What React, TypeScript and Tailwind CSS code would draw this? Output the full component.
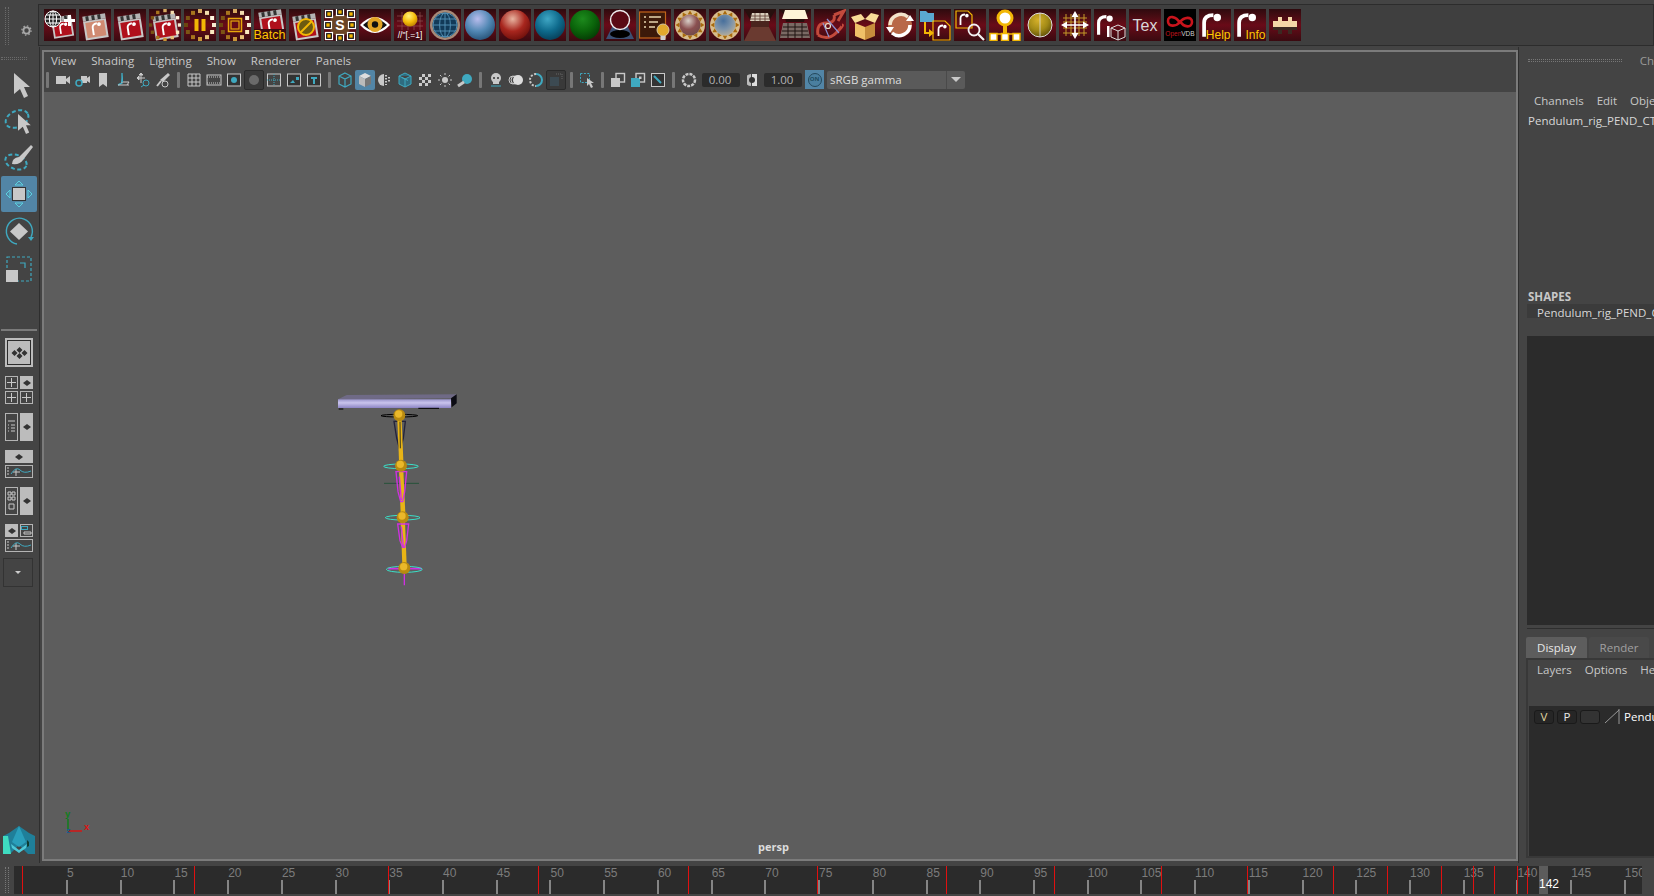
import type { ReactNode } from "react";

const UI_FONT = "font-['Open_Sans','Noto_Sans',sans-serif]";

const Sphere = ({ id, light, mid, dark, r = 13, cy = 16 }: { id: string; light: string; mid: string; dark: string; r?: number; cy?: number }) => (
  <>
    <radialGradient id={id} cx="0.42" cy="0.3" r="0.75">
      <stop offset="0" stopColor={light} />
      <stop offset="0.55" stopColor={mid} />
      <stop offset="1" stopColor={dark} />
    </radialGradient>
    <circle cx="16" cy={cy} r={r} fill={`url(#${id})`} />
  </>
);

const Swirl = ({ x = 0, y = 0, s = 1, color = "#fff" }: { x?: number; y?: number; s?: number; color?: string }) => (
  <g transform={`translate(${x} ${y}) scale(${s})`}>
    <path d="M2 16V7Q2 2 8 2" fill="none" stroke={color} strokeWidth="2.4" />
    <circle cx="10.5" cy="3.5" r="2.4" fill={color} />
  </g>
);

const Clap = ({ body = "#b0101c" }: { body?: string }) => (
  <g transform="rotate(-9 16 18)">
    <rect x="5" y="6" width="23" height="5" fill="#b4b4b4" />
    <path d="M8 6h3v5H8zM14 6h3v5h-3zM20 6h3v5h-3z" fill="#333" />
    <rect x="5" y="11" width="23" height="19" fill="#c8c8c8" />
    <rect x="7" y="12.5" width="19" height="15.5" fill={body} />
    <Swirl x={12} y={13} s={0.8} />
  </g>
);

const RING = ["#f6ead0", "#fbe9c0", "#e8c27a", "#c99436", "#a8741e", "#7c5414", "#6b4510", "#7c5414", "#a8741e", "#d6a860", "#f2dcae", "#fff6e0"];

const Ring = ({ radius = 14, size = 4 }: { radius?: number; size?: number }) => (
  <>
    {RING.map((c, i) => {
      const a = (i * Math.PI) / 6;
      const x = 16 + radius * Math.cos(a) - size / 2;
      const y = 16 + radius * Math.sin(a) - size / 2;
      return <rect key={i} x={x} y={y} width={size} height={size} fill={c} />;
    })}
  </>
);

const TriRing = () => (
  <>
    <circle cx="16" cy="16" r="15" fill="#d8bd8c" />
    {Array.from({ length: 12 }).map((_, i) => (
      <path key={i} d="M16 1.5l2.4 4h-4.8z" fill="#a86a0c" transform={`rotate(${i * 30} 16 16)`} />
    ))}
  </>
);

const Handle = ({ x, y }: { x: number; y: number }) => (
  <g>
    <rect x={x - 3.5} y={y - 3.5} width="7" height="7" fill="#111" stroke="#fff" strokeWidth="1.2" />
    <rect x={x - 1.7} y={y - 1.7} width="3.4" height="3.4" fill="#f2b705" />
  </g>
);

const GlobeLines = ({ stroke = "#fff", cx = 16, cy = 16, r = 10 }: { stroke?: string; cx?: number; cy?: number; r?: number }) => (
  <g fill="none" stroke={stroke} strokeWidth="1">
    <circle cx={cx} cy={cy} r={r} />
    <ellipse cx={cx} cy={cy} rx={r * 0.45} ry={r} />
    <path d={`M${cx} ${cy - r}V${cy + r}M${cx - r} ${cy}H${cx + r}M${cx - r * 0.87} ${cy - r * 0.5}H${cx + r * 0.87}M${cx - r * 0.87} ${cy + r * 0.5}H${cx + r * 0.87}`} />
  </g>
);

const YText = ({ children, x = 31.5, size = 10 }: { children: string; x?: number; size?: number }) => (
  <text x={x} y="29.5" textAnchor="end" fontSize={size} fill="#ffc800" fontFamily="Liberation Sans, sans-serif">
    {children}
  </text>
);

const SHELF: { key: string; black?: boolean; art: ReactNode }[] = [
  {
    key: "new-render",
    art: (
      <>
        <g transform="translate(4 2) scale(0.88)"><Clap /></g>
        <circle cx="9" cy="10" r="8" fill="#222" />
        <GlobeLines cx={9} cy={10} r={8} />
        <path d="M20 10h4V6h3v4h4v3h-4v4h-3v-4h-4z" fill="#fff" />
      </>
    ),
  },
  { key: "clap-soft", art: <Clap body="#d08a72" /> },
  { key: "clap", art: <Clap /> },
  { key: "clap-ring", art: <><Clap /><Ring radius={14.5} size={3.4} /></> },
  { key: "pause", art: <><Ring /><path d="M10.5 10h4v12h-4zM17.5 10h4v12h-4z" fill="#f2b705" /></> },
  { key: "stop", art: <><Ring /><rect x="9.5" y="9.5" width="13" height="13" fill="none" stroke="#e8a80c" strokeWidth="1.5" /><rect x="12" y="12" width="8" height="8" fill="none" stroke="#e8a80c" strokeWidth="1.2" /></> },
  { key: "batch", art: <><g transform="translate(1 -4)"><Clap /></g><rect y="20" width="32" height="12" fill="#3a0a10" /><YText size={12.5}>Batch</YText></> },
  { key: "no-clap", art: <><Clap /><circle cx="17" cy="18" r="8" fill="#6d5a10" stroke="#f2b705" strokeWidth="2" /><path d="M11.5 23.5l11-11" stroke="#f2b705" strokeWidth="2" /></> },
  {
    key: "shaders",
    art: (
      <>
        <circle cx="16" cy="16" r="11" fill="#6a4426" />
        <text x="16" y="21" textAnchor="middle" fontSize="14" fontWeight="700" fill="#fff" fontFamily="Liberation Sans, sans-serif">S</text>
        {[[5, 5], [16, 3], [27, 5], [4, 16], [28, 16], [5, 27], [16, 29], [27, 27]].map(([x, y]) => (
          <Handle key={`${x}-${y}`} x={x} y={y} />
        ))}
      </>
    ),
  },
  {
    key: "eye",
    art: (
      <>
        <path d="M1 16Q16 0 31 16Q16 32 1 16Z" fill="#fff" />
        <path d="M4 16Q16 4 28 16Q16 27 4 16Z" fill="#111" />
        <circle cx="16" cy="15.5" r="7.5" fill="#e2a424" />
        <circle cx="16" cy="15.5" r="3.2" fill="#111" />
      </>
    ),
  },
  {
    key: "expr",
    art: (
      <>
        <path d="M3 7h26M3 12h26M3 17h26M8 3v18M14 3v18M20 3v18M26 3v18" stroke="#9c5a5a" strokeWidth="0.6" />
        <Sphere id="s-expr" light="#fff27a" mid="#f6bd0a" dark="#b87a00" r={7.5} cy={10} />
        <text x="16" y="29" textAnchor="middle" fontSize="8.5" fill="#fff" fontFamily="Liberation Sans, sans-serif">//"[.=1]</text>
      </>
    ),
  },
  { key: "globe", art: <><circle cx="16" cy="16" r="15" fill="#a68a78" /><circle cx="16" cy="16" r="12.5" fill="#123a58" /><GlobeLines stroke="#4f8cb0" r={12} /></> },
  { key: "sphere-blue", art: <Sphere id="s-blue" light="#b8bcec" mid="#5288b4" dark="#244f74" r={15} /> },
  { key: "sphere-red", art: <Sphere id="s-red" light="#e8b4a0" mid="#a8261e" dark="#6a0e0a" r={15} /> },
  { key: "sphere-teal", art: <Sphere id="s-teal" light="#3fa6c4" mid="#0e6a8c" dark="#063c55" r={15} /> },
  { key: "sphere-green", art: <Sphere id="s-green" light="#1d8a1d" mid="#0a640a" dark="#043804" r={15} /> },
  {
    key: "cone",
    art: (
      <>
        <path d="M11 12L2 30h28l-9-18z" fill="#3c4f72" />
        <ellipse cx="16" cy="25" rx="10" ry="4" fill="#000" />
        <circle cx="16" cy="11" r="9.5" fill="#5a0a14" stroke="#eee" strokeWidth="1.4" />
      </>
    ),
  },
  {
    key: "list-bulb",
    art: (
      <>
        <rect x="0.5" y="3" width="26" height="26" fill="#3c1a0a" stroke="#c2641a" strokeWidth="1.2" />
        <path d="M5 8h2M10 8h12M5 13h2M10 13h9M5 18h2M10 18h6" stroke="#e7d6b0" strokeWidth="1.6" />
        <circle cx="24" cy="21" r="6" fill="#e2a92c" stroke="#d9c9a0" />
        <rect x="21.5" y="27" width="5" height="4" fill="#cfcfcf" />
      </>
    ),
  },
  { key: "tri-red", art: <><TriRing /><Sphere id="s-tr" light="#d8cfc8" mid="#8a5050" dark="#6e4a4a" r={10.5} /></> },
  { key: "tri-blue", art: <><TriRing /><Sphere id="s-tb" light="#476f9c" mid="#7e94aa" dark="#b8ae98" r={10.5} /></> },
  {
    key: "room-top",
    art: (
      <>
        <path d="M0 0h32L25 12H7z" fill="#27100e" />
        <path d="M8 4h16l2 8H6z" fill="#d8cebc" />
        <path d="M6 7h20M6 10h20M11 4v8M16 4v8M21 4v8" stroke="#5a3a30" strokeWidth="0.8" />
        <path d="M0 32L7 18h18l7 14z" fill="#6a3a30" />
        <path d="M7 18h18v-6H7z" fill="#4a241e" />
      </>
    ),
  },
  {
    key: "room-bottom",
    art: (
      <>
        <path d="M0 0h32L27 5l-2 8H7L5 5z" fill="#27100e" />
        <path d="M6 1h20l3 9H3z" fill="#fff4d8" />
        <path d="M4 14h24l3 15H1z" fill="#7a6a64" />
        <path d="M4 18h24M3 22h26M2 26h28M9 14v15M16 14v15M23 14v15" stroke="#1e1210" strokeWidth="1" />
      </>
    ),
  },
  {
    key: "tangle",
    art: (
      <>
        <path d="M4 26Q2 14 12 14T20 6M20 6L30 2L24 12M4 26Q14 32 22 24T28 16" fill="none" stroke="#c24a3c" strokeWidth="3" />
        <path d="M9 14l6 14M13 10l12 14" fill="none" stroke="#8b8fd0" strokeWidth="1.2" />
        <circle cx="14" cy="17" r="2.5" fill="none" stroke="#e8e0c8" strokeWidth="1.2" />
      </>
    ),
  },
  {
    key: "box",
    art: (
      <>
        <path d="M6 14l10 4v13L6 27z" fill="#f0c068" />
        <path d="M26 14l-10 4v13l10-4z" fill="#c78c3c" />
        <path d="M6 14L2 8l10-3 4 5-10 4zM26 14l4-8-8-2-6 6z" fill="#f8dc96" />
      </>
    ),
  },
  {
    key: "refresh",
    art: (
      <>
        <circle cx="16" cy="16" r="12" fill="#b86848" />
        <path d="M6 16A11 11 0 0 1 24 8" fill="none" stroke="#f2e4cc" strokeWidth="3.5" />
        <path d="M26 16A11 11 0 0 1 8 24" fill="none" stroke="#fff" strokeWidth="3.5" />
        <path d="M2 18h8l-4 6zM22 12h8l-4 -6z" fill="#fff" />
      </>
    ),
  },
  {
    key: "folder",
    art: (
      <>
        <path d="M1 2h6l2 2h6v9H1z" fill="#5aa8d0" />
        <path d="M6 13v11h5" fill="none" stroke="#f2b705" strokeWidth="2" />
        <path d="M10 20v8l5-4z" fill="#f2b705" />
        <path d="M14 12h12l5 5v14H14z" fill="none" stroke="#f2b705" strokeWidth="1.2" />
        <Swirl x={18} y={15} s={0.75} />
      </>
    ),
  },
  {
    key: "search",
    art: (
      <>
        <path d="M2 2h12l4 4v13H2z" fill="none" stroke="#f2b705" strokeWidth="1.2" />
        <Swirl x={5} y={4} s={0.75} />
        <circle cx="20" cy="21" r="5.5" fill="none" stroke="#f2f2f2" strokeWidth="1.8" />
        <path d="M24 25l6 6" stroke="#f2f2f2" strokeWidth="2.2" />
      </>
    ),
  },
  {
    key: "pin",
    art: (
      <>
        <path d="M14 14h4v10h-4z" fill="#f2b705" />
        <circle cx="16" cy="9" r="7" fill="#fff" stroke="#f2b705" strokeWidth="3" />
        <path d="M3 25h26" stroke="#f2b705" strokeWidth="1.5" />
        <rect x="1" y="24.5" width="7" height="7" fill="#fff" stroke="#f2b705" strokeWidth="1.5" />
        <rect x="12.5" y="24.5" width="7" height="7" fill="#fff" stroke="#f2b705" strokeWidth="1.5" />
        <rect x="24" y="24.5" width="7" height="7" fill="#fff" stroke="#f2b705" strokeWidth="1.5" />
      </>
    ),
  },
  { key: "olive", art: <><Sphere id="s-ol" light="#d6b12a" mid="#a28a16" dark="#5a4a08" r={12} /><circle cx="16" cy="16" r="12" fill="none" stroke="#ddd" strokeWidth="1" /><path d="M16 4v24" stroke="#ddd" strokeWidth="0.8" /></> },
  {
    key: "grid",
    art: (
      <>
        <path d="M7 5v22M12 5v22M20 5v22M25 5v22M4 9h24M4 13h24M4 19h24M4 24h24" stroke="#c49a28" strokeWidth="1" />
        <path d="M16 2l-3.5 6h7zM16 30l-3.5-6h7zM2 16l6-3.5v7zM30 16l-6-3.5v7z" fill="#fff" />
        <path d="M16 6v20M6 16h20" stroke="#fff" strokeWidth="1.6" />
      </>
    ),
  },
  {
    key: "r-cube",
    art: (
      <>
        <Swirl x={2} y={5} s={1.3} />
        <rect x="13" y="17" width="2.5" height="11" fill="#fff" />
        <path d="M17 19l7-3 7 3v9l-7 3-7-3zM17 19l7 3 7-3M24 22v9" fill="none" stroke="#ddd" strokeWidth="1" />
      </>
    ),
  },
  {
    key: "tex",
    art: (
      <text x="16" y="21.5" textAnchor="middle" fontSize="16" fill="#d8d8d8" fontFamily="Liberation Sans, sans-serif">
        Tex
      </text>
    ),
  },
  {
    key: "vdb",
    black: true,
    art: (
      <>
        <path d="M16 14C12 7 4 6 4 12s8 6 12 1 12-6 12 0-8 6-12-1" fill="none" stroke="#c8141c" strokeWidth="2.6" />
        <text x="16" y="27" textAnchor="middle" fontSize="6.5" fill="#c8141c" fontFamily="Liberation Sans, sans-serif">
          Open<tspan fill="#cfcfcf">VDB</tspan>
        </text>
      </>
    ),
  },
  { key: "help", art: <><Swirl x={2} y={3} s={1.55} /><YText size={12}>Help</YText></> },
  { key: "info", art: <><Swirl x={2} y={3} s={1.55} /><YText size={12}>Info</YText></> },
  {
    key: "puzzle",
    art: (
      <>
        <path d="M4 12h5V8h4v4h6V8h4v4h5v9h-5v4h-4v-4h-6v4H9v-4H4z" fill="#f4d8a8" />
        <path d="M4 18h24v3h-5v4h-4v-4h-6v4H9v-4H4z" fill="#1a0a0a" opacity="0.85" />
      </>
    ),
  },
];

function ShelfIcon({ black, children }: { black?: boolean; children: ReactNode }) {
  return (
    <div className={`h-8 w-8 shrink-0 ${black ? "bg-black" : "bg-gradient-to-b from-[#2e0a0e] via-[#690a18] to-[#3a0a10]"}`}>
      <svg viewBox="0 0 32 32" className="h-8 w-8">
        {children}
      </svg>
    </div>
  );
}

function Shelf() {
  return (
    <div className="flex h-[47px] shrink-0 pt-[4px]">
      <div className="flex w-[38px] shrink-0 items-center justify-between pl-[5px] pr-[6px]">
        <div className="h-[38px] w-[4px] border-x border-dotted border-[#6a6a6a]" />
        <svg viewBox="0 0 12 12" className="mt-[10px] h-[11px] w-[11px]">
          <circle cx="6" cy="6" r="3.4" fill="none" stroke="#a8a8a8" strokeWidth="2" />
          <circle cx="6" cy="6" r="5" fill="none" stroke="#a8a8a8" strokeWidth="1.4" strokeDasharray="1.6 2.3" />
        </svg>
      </div>
      <div className="flex h-[42px] flex-1 items-center gap-[3px] border border-[#2c2c2c] bg-[#3f3f3f] pl-[5px]">
        {SHELF.map((s) => (
          <ShelfIcon key={s.key} black={s.black}>
            {s.art}
          </ShelfIcon>
        ))}
      </div>
    </div>
  );
}

const TEAL = "#3fa9c0";
const GREY = "#c8c8c8";

const Arrow = ({ x = 0, y = 0, s = 1 }: { x?: number; y?: number; s?: number }) => (
  <path transform={`translate(${x} ${y}) scale(${s})`} d="M0 0L16 14H10L14 23L10 25L6 16L0 21Z" fill={GREY} />
);

function LeftTools() {
  return (
    <div className="flex w-[40px] shrink-0 flex-col items-start border-r border-[#2e2e2e]">
      <div className="ml-[1px] mt-[10px] h-[3px] w-[26px] border-y border-dotted border-[#6a6a6a]" />
      <div className="mt-[10px] flex h-[32px] w-[40px] items-center justify-center pl-[3px]">
        <svg width="20" height="28" viewBox="0 0 20 28"><Arrow x={2} y={1} s={1} /></svg>
      </div>
      <div className="flex h-[38px] w-[38px] items-center justify-center">
        <svg width="30" height="30" viewBox="0 0 30 30">
          <ellipse cx="13" cy="13" rx="12" ry="8" transform="rotate(-25 13 13)" fill="none" stroke={TEAL} strokeWidth="2" strokeDasharray="4 2.5" />
          <Arrow x={14} y={8} s={0.8} />
        </svg>
      </div>
      <div className="flex h-[36px] w-[38px] items-center justify-center">
        <svg width="30" height="30" viewBox="0 0 30 30">
          <ellipse cx="12" cy="19" rx="11" ry="7" transform="rotate(20 12 19)" fill="none" stroke={TEAL} strokeWidth="2" strokeDasharray="4 2.5" />
          <path d="M8 21Q8 15 15 14L27 2L29 4L19 17Q16 22 8 21Z" fill={GREY} />
        </svg>
      </div>
      <div className="ml-[1px] flex h-[36px] w-[36px] items-center justify-center rounded-[2px] bg-[#5285a6]">
        <svg width="30" height="30" viewBox="0 0 30 30">
          <rect x="8.5" y="8.5" width="13" height="13" fill={GREY} stroke="#333" />
          <path d="M11 6l4-4 4 4zM11 24l4 4 4-4zM6 11l-4 4 4 4zM24 11l4 4-4 4z" fill="#5285a6" stroke="#5cd0de" />
        </svg>
      </div>
      <div className="flex h-[38px] w-[38px] items-center justify-center pt-[2px]">
        <svg width="32" height="32" viewBox="0 0 32 32">
          <path d="M28 21A13 13 0 1 0 14 28" fill="none" stroke={TEAL} strokeWidth="1.4" />
          <path d="M25 21h6l-3 4z" fill={TEAL} />
          <path d="M16 7l9 8.5-9 8.5-9-8.5z" fill={GREY} />
        </svg>
      </div>
      <div className="flex h-[38px] w-[38px] items-center justify-center">
        <svg width="28" height="28" viewBox="0 0 28 28">
          <rect x="2" y="2" width="24" height="24" fill="none" stroke={TEAL} strokeWidth="1.2" strokeDasharray="3 2" />
          <path d="M15 8h5v5" fill="none" stroke={TEAL} strokeWidth="1.2" />
          <rect x="1" y="15" width="12" height="12" fill={GREY} />
        </svg>
      </div>
      <div className="ml-[1px] mt-[41px] h-[2px] w-[36px] bg-[#7a7a7a]" />
      <div className="ml-[5px] mt-[7px] flex h-[29px] w-[28px] items-center justify-center border-2 border-[#bcbcbc] bg-[#bcbcbc]">
        <div className="flex h-full w-full items-center justify-center border border-[#2c2c2c]"><Diamond4 /></div>
      </div>
      <div className="ml-[5px] mt-[9px] grid grid-cols-[13px_13px] gap-x-[2px] gap-y-[2px]">
        <PlusBox />
        <LightBox className="h-[13px]" />
        <PlusBox />
        <PlusBox />
      </div>
      <div className="ml-[5px] mt-[9px] flex gap-[2px]">
        <FrameBox>
          <svg width="9" height="16" viewBox="0 0 9 16"><path d="M1 2h7M4 6h4M1 6h1M4 9h4M1 9h1M4 12h4M1 12h1" stroke={GREY} /></svg>
        </FrameBox>
        <LightBox className="h-[28px]" />
      </div>
      <LightBox className="ml-[5px] mt-[9px] h-[13px] w-[28px]" />
      <CurveBox className="ml-[5px] mt-[2px]" />
      <div className="ml-[5px] mt-[9px] flex gap-[2px]">
        <FrameBox>
          <svg width="9" height="20" viewBox="0 0 9 20"><path d="M1 1h3v3H1zM5 1h3v3H5zM1 6h3v3H1zM5 6h3v3H5zM2 13h5v5H2z" fill="none" stroke={GREY} /></svg>
        </FrameBox>
        <LightBox className="h-[28px]" />
      </div>
      <div className="ml-[5px] mt-[9px] flex gap-[2px]">
        <LightBox className="h-[13px]" />
        <div className="flex h-[13px] w-[13px] items-center justify-center border border-[#b4b4b4]">
          <svg width="11" height="9" viewBox="0 0 11 9"><rect x="0.5" y="0.5" width="6" height="3" fill="none" stroke={TEAL} /><path d="M3 6h7v2H3z" fill="none" stroke={GREY} /></svg>
        </div>
      </div>
      <CurveBox className="ml-[5px] mt-[2px]" />
      <div className="ml-[3px] mt-[6px] flex h-[29px] w-[30px] items-center justify-center border border-[#333]">
        <div className="h-0 w-0 border-x-[3px] border-t-[3px] border-x-transparent border-t-[#ccc]" />
      </div>
      <div className="mb-[9px] ml-[3px] mt-auto">
        <svg width="32" height="28" viewBox="0 0 32 28">
          <path d="M6 7L16 0l10 7 6 3v18h-7L16 19 7 28H0V10z" fill="#1f7f99" />
          <path d="M0 10h5l3 18H0z" fill="#3fdcc0" />
          <path d="M16 0L9 16l7 5 7-5z" fill="#2a9fbb" />
          <path d="M8 18l8 6 8-6-1 4-7 5-7-5z" fill="#4ec9d8" />
          <path d="M24 14l2 2v4l-2 1z" fill="#0e3a30" />
        </svg>
      </div>
    </div>
  );
}

const Diamond4 = () => (
  <svg width="17" height="12" viewBox="0 0 17 12">
    <path d="M8.5 0l3 3-3 3-3-3zM3.5 3l3 3-3 3-3-3zM13.5 3l3 3-3 3-3-3zM8.5 6l3 3-3 3-3-3z" fill="#333" />
  </svg>
);

const PlusBox = () => (
  <div className="flex h-[13px] w-[13px] items-center justify-center border border-[#b4b4b4]">
    <svg width="9" height="9" viewBox="0 0 9 9"><path d="M4.5 0v9M0 4.5h9" stroke={GREY} /></svg>
  </div>
);

const LightBox = ({ className = "" }: { className?: string }) => (
  <div className={`flex w-[13px] items-center justify-center bg-[#bcbcbc] ${className}`}>
    <svg width="8" height="6" viewBox="0 0 8 6"><path d="M4 0l4 3-4 3-4-3z" fill="#333" /></svg>
  </div>
);

const FrameBox = ({ children }: { children: ReactNode }) => (
  <div className="flex h-[28px] w-[13px] items-center justify-center border border-[#b4b4b4]">{children}</div>
);

const CurveBox = ({ className = "" }: { className?: string }) => (
  <div className={`flex h-[13px] w-[28px] items-center justify-center border border-[#b4b4b4] ${className}`}>
    <svg width="26" height="9" viewBox="0 0 26 9">
      <path d="M1 1h2M1 4h2M1 7h2M10 2v7M7 5h7" stroke={GREY} />
      <path d="M5 7Q10-1 14 3T25 4" fill="none" stroke={TEAL} />
    </svg>
  </div>
);

const Sep = () => <div className="mx-[4px] h-[16px] w-[3px] rounded-[1px] bg-[#777]" />;

const T = ({ children, selected, boxed }: { children: ReactNode; selected?: boolean; boxed?: boolean }) => (
  <div className={`flex h-[20px] w-[20px] shrink-0 items-center justify-center rounded-[2px] ${selected ? "bg-[#5285a6]" : ""} ${boxed ? "border border-[#2a2a2a] bg-[#393939]" : ""}`}>
    <svg width="16" height="16" viewBox="0 0 16 16">{children}</svg>
  </div>
);

const ICON_GROUPS: { key: string; selected?: boolean; boxed?: boolean; art: ReactNode }[][] = [
  [
    { key: "cam", art: <path d="M1 4h10v8H1zM11 7l4-3v8l-4-3z" fill={GREY} /> },
    { key: "cam2", art: <><path d="M6 4h6v7H6zM12 6l3-2v7l-3-2z" fill={GREY} /><circle cx="4" cy="11" r="3" fill="none" stroke={TEAL} strokeWidth="1.5" /></> },
    { key: "book", art: <path d="M4 1h8v14l-4-3-4 3z" fill={GREY} /> },
    { key: "plane", art: <><path d="M7 1v10l-4 2" fill="none" stroke={TEAL} strokeWidth="1.4" /><path d="M3 13h11M6 10h8l-2 3" fill="none" stroke={GREY} /><path d="M8 2v8h-2z" fill={TEAL} /></> },
    { key: "move2", art: <><path d="M6 1v10M2 6h8M6 1L4 3h4zM2 6l2-2v4z" stroke={GREY} fill={GREY} /><circle cx="11" cy="11" r="3" fill="none" stroke={TEAL} /><path d="M9 13l-3 2" stroke={TEAL} /></> },
    { key: "brush", art: <><path d="M13 1l2 2-7 7-3-2z" fill={GREY} /><circle cx="10" cy="12" r="3" fill="none" stroke={GREY} /><path d="M2 14l4-5" stroke={GREY} strokeWidth="2" /></> },
  ],
  [
    { key: "grid", art: <path d="M2 2h12v12H2zM6 2v12M10 2v12M2 6h12M2 10h12" fill="none" stroke={GREY} /> },
    { key: "film", art: <><rect x="1" y="3" width="14" height="10" fill="none" stroke={GREY} /><path d="M1 5h14M1 11h14" stroke={GREY} strokeDasharray="1 1" /></> },
    { key: "gate", art: <><rect x="1.5" y="2" width="13" height="12" fill="#333" stroke={GREY} /><circle cx="8" cy="8" r="3" fill={TEAL} /></> },
    { key: "resgate", boxed: true, art: <circle cx="8" cy="8" r="5" fill="#6a6a6a" /> },
    { key: "fieldchart", art: <><rect x="1.5" y="2" width="13" height="12" fill="none" stroke={GREY} /><path d="M8 2v12M1 8h14" stroke={TEAL} strokeDasharray="1 1" /></> },
    { key: "safe", art: <><rect x="1.5" y="2" width="13" height="12" fill="#333" stroke={GREY} /><path d="M4 11l3-3 2 3zM10 5h3v3h-3z" fill={TEAL} /></> },
    { key: "title", art: <><rect x="1.5" y="2" width="13" height="12" fill="#333" stroke={GREY} /><path d="M5 5h6v2H9v5H7V7H5z" fill={TEAL} /></> },
  ],
  [
    { key: "wire", art: <path d="M8 1l6 3v8l-6 3-6-3V4zM2 4l6 3 6-3M8 7v8" fill="none" stroke={TEAL} strokeWidth="1.2" /> },
    { key: "solid", selected: true, art: <><path d="M8 1l6 3-6 3-6-3z" fill="#ddd" /><path d="M2 4l6 3v8l-6-3z" fill="#bbb" /><path d="M14 4L8 7v8l6-3z" fill="#777" /></> },
    { key: "half", art: <><path d="M7 2a6 6 0 0 0 0 12z" fill={GREY} /><path d="M9 3v10M12 5v6" stroke={GREY} strokeDasharray="1.5 1.5" strokeWidth="2" /></> },
    { key: "tex-cube", art: <path d="M8 1l6 3v8l-6 3-6-3V4zM2 4l6 3 6-3M8 7v8M5 5.5l6 3" fill="#2f6c80" stroke={TEAL} /> },
    { key: "checker", art: <path d="M5 2h3v3H5zM8 5h3v3H8zM5 8h3v3H5zM2 5h3v3H2zM11 2h3v3h-3zM11 8h3v3h-3zM8 11h3v3H8zM2 11h3v3H2z" fill={GREY} /> },
    { key: "light", art: <><circle cx="8" cy="8" r="3" fill={GREY} /><path d="M8 1v2M8 13v2M1 8h2M13 8h2M3 3l1.5 1.5M13 3l-1.5 1.5M3 13l1.5-1.5M13 13l-1.5-1.5" stroke={GREY} /></> },
    { key: "shadow", art: <><circle cx="10" cy="7" r="5" fill={TEAL} /><path d="M1 14l6-4" stroke={GREY} strokeWidth="3" /></> },
  ],
  [
    { key: "skull", art: <><circle cx="8" cy="6" r="5" fill={GREY} /><path d="M5 10h6v2H5z" fill={GREY} /><path d="M3 14h10" stroke={TEAL} /><circle cx="6" cy="6" r="1" fill="#333" /><circle cx="10" cy="6" r="1" fill="#333" /></> },
    { key: "xray", art: <><circle cx="5" cy="8" r="4" fill="none" stroke={GREY} /><circle cx="7" cy="8" r="4" fill="none" stroke={GREY} /><circle cx="10" cy="8" r="5" fill="#ddd" /></> },
    { key: "aa", art: <><path d="M8 2a6 6 0 0 1 0 12" fill="none" stroke={TEAL} strokeWidth="2" /><path d="M8 2a6 6 0 0 0 0 12" fill="none" stroke={GREY} strokeWidth="2" strokeDasharray="2 1.5" /></> },
    { key: "dof", boxed: true, art: <><rect x="2" y="5" width="9" height="9" fill="#3c4a52" /><path d="M8 2h6v6" stroke="#666" strokeDasharray="1 1" fill="none" /></> },
  ],
  [
    { key: "select", art: <><rect x="1.5" y="1.5" width="9" height="9" fill="none" stroke={TEAL} strokeDasharray="2 1.4" /><path d="M8 6l7 5h-3l2 4-2 1-2-4-2 2z" fill={GREY} /></> },
  ],
  [
    { key: "iso", art: <><rect x="6" y="1.5" width="8.5" height="8.5" fill="none" stroke={GREY} strokeWidth="1.4" /><rect x="1" y="6" width="9" height="9" fill={GREY} /></> },
    { key: "iso2", art: <><rect x="6" y="1.5" width="8.5" height="8.5" fill="none" stroke={GREY} strokeWidth="1.4" /><rect x="1" y="6" width="9" height="9" fill={TEAL} /><rect x="9" y="4.5" width="2.5" height="2.5" fill={GREY} /></> },
    { key: "iso3", art: <><rect x="1.5" y="1.5" width="13" height="13" fill="#333" stroke={GREY} /><path d="M4 4l2 2M6 6l5 5" stroke={TEAL} strokeWidth="2" /></> },
  ],
];

function ViewToolbar() {
  return (
    <div className={`flex h-[23px] items-center pb-[2px] text-[11.5px] ${UI_FONT}`}>
      <div className="-ml-[2px]">
        <Sep />
      </div>
      {ICON_GROUPS.map((group, i) => (
        <div key={i} className="flex items-center">
          <div className="flex">
            {group.map((t) => (
              <T key={t.key} selected={t.selected} boxed={t.boxed}>
                {t.art}
              </T>
            ))}
          </div>
          <Sep />
        </div>
      ))}
      <T>
        <circle cx="8" cy="8" r="6" fill="none" stroke={GREY} strokeWidth="2.5" strokeDasharray="3 1" />
      </T>
      <div className="ml-[3px] flex h-[14px] w-[38px] items-center justify-center rounded-[2px] bg-[#2b2b2b] pr-[2px] text-[#b4b4b4]">0.00</div>
      <div className="flex w-[24px] justify-center">
        <svg width="10" height="14" viewBox="0 0 10 14"><path d="M4 1a6 6 0 0 0 0 12z" fill="#bbb" /><path d="M5 1h5v12H5z" fill="#ddd" /><circle cx="5" cy="7" r="3" fill="#333" /></svg>
      </div>
      <div className="flex h-[14px] w-[38px] items-center justify-center rounded-[2px] bg-[#2b2b2b] pr-[2px] text-[#b4b4b4]">1.00</div>
      <div className="ml-[3px] flex h-[19px] w-[19px] items-center justify-center bg-[#5285a6]">
        <div className="flex h-[14px] w-[14px] items-center justify-center rounded-full border border-[#24485c] bg-[#4a7f9f] text-[6px] font-bold text-[#1e4a5e]">ON</div>
      </div>
      <div className="ml-[3px] flex h-[18px] w-[138px] items-center rounded-[2px] bg-[#5a5a5a] text-[#dcdcdc]">
        <span className="flex-1 pl-[3px]">sRGB gamma</span>
        <div className="flex h-full w-[19px] items-center justify-center border-l border-[#4a4a4a]">
          <div className="h-0 w-0 border-x-[5px] border-t-[5px] border-x-transparent border-t-[#c8c8c8]" />
        </div>
      </div>
    </div>
  );
}

function Pendulum() {
  return (
    <svg viewBox="0 0 450 630" width="150" height="210" className="absolute left-[276px] top-[288px]">
      <path d="M54 58L80 45L410 43L393 55Z" fill="#6f6a86" />
      <path d="M393 55L410 43V70L395 82Z" fill="#0c0c14" />
      <defs>
        <linearGradient id="bar" x1="0" y1="0" x2="0" y2="1">
          <stop offset="0" stopColor="#9a94cc" />
          <stop offset="0.4" stopColor="#c9c4ec" />
          <stop offset="1" stopColor="#8c84c4" />
        </linearGradient>
      </defs>
      <path d="M54 58H393V84H54Z" fill="url(#bar)" />
      <path d="M56 87h14M295 85h62" stroke="#000" strokeWidth="3" />
      <g fill="none">
        <ellipse cx="238" cy="107" rx="55" ry="4" stroke="#000" strokeWidth="3" />
        <path d="M222 124h34l-6 50-8 30h-4l-8-30z" stroke="#23233a" strokeWidth="4" />
        <path d="M192 310h105" stroke="#27523a" strokeWidth="3" />
      </g>
      <path d="M232 120h13l5 120h-13z" fill="#e8b416" />
      <path d="M237 270h13l6 130h-14z" fill="#e8b416" />
      <path d="M242 425h13l5 130h-13z" fill="#e8b416" />
      <path d="M240 125l1 80" stroke="#3a3a20" strokeWidth="3" />
      <g fill="none" stroke="#d030e2" strokeWidth="4">
        <path d="M228 275h32l-6 60-6 30h-6l-8-30zM238 290l6 70" />
        <path d="M233 432h33l-6 50-6 20h-6l-8-20zM244 440l6 60" />
        <path d="M253 580v36" />
        <path d="M205 566h100" strokeWidth="5" />
      </g>
      <g fill="none" stroke="#3ae0c8" strokeWidth="3">
        <ellipse cx="243" cy="259" rx="52" ry="7" />
        <ellipse cx="248" cy="413" rx="52" ry="7" />
        <ellipse cx="253" cy="568" rx="54" ry="9" />
      </g>
      {[[238, 106], [243, 257], [248, 412], [253, 564]].map(([cx, cy]) => (
        <g key={cy}>
          <circle cx={cx} cy={cy} r="18" fill="#b88a10" />
          <circle cx={cx - 2} cy={cy - 4} r="11" fill="#eab82a" />
        </g>
      ))}
    </svg>
  );
}

function Gizmo() {
  return (
    <svg width="32" height="32" viewBox="0 0 32 32" className="absolute left-[16px] top-[715px]">
      <path d="M8 12V24" stroke="#0c8018" strokeWidth="1.4" />
      <path d="M8 24H22" stroke="#e01010" strokeWidth="1.4" />
      <text x="5" y="10" fontSize="9" fill="#0c8018" fontFamily="Liberation Mono, monospace" fontWeight="700">y</text>
      <text x="24" y="23" fontSize="9" fill="#e01010" fontFamily="Liberation Mono, monospace" fontWeight="700">x</text>
      <text x="6" y="26" fontSize="8" fill="#1a5a8c" fontFamily="Liberation Mono, monospace" fontWeight="700">z</text>
    </svg>
  );
}

function Viewport() {
  return (
    <div className="mb-[2px] ml-[2px] mt-[3px] flex w-[1476px] shrink-0 flex-col border-2 border-[#7b7b7b] bg-[#444]">
      <div className={`flex h-[17px] items-center gap-[15px] pl-[7px] pt-[1px] text-[11.5px] text-[#c8c8c8] ${UI_FONT}`}>
        {["View", "Shading", "Lighting", "Show", "Renderer", "Panels"].map((m) => (
          <span key={m}>{m}</span>
        ))}
      </div>
      <ViewToolbar />
      <div className="relative flex-1 bg-[#5d5d5d]">
        <Pendulum />
        <Gizmo />
        <span className={`absolute left-[714px] top-[747px] text-[11px] font-bold text-[#dcdcdc] ${UI_FONT}`}>persp</span>
      </div>
    </div>
  );
}

function RightPanel() {
  return (
    <div className={`flex-1 overflow-hidden whitespace-nowrap border-l border-[#2e2e2e] text-[11.5px] text-[#c8c8c8] ${UI_FONT}`}>
      <div className="ml-[9px] mt-[6px] flex h-[15px] items-center">
        <div className="h-[3px] w-[98px] border-y border-dotted border-[#777]" />
        <span className="ml-[18px] text-[#9a9a9a]">Ch</span>
      </div>
      <div className="ml-[15px] mt-[25px] flex h-[16px] items-center gap-[13px]">
        <span>Channels</span>
        <span>Edit</span>
        <span>Obje</span>
      </div>
      <div className="ml-[9px] mt-[4px] flex h-[16px] items-center font-medium text-[#d8d8d8]">Pendulum_rig_PEND_CT</div>
      <div className="ml-[9px] mt-[160px] flex h-[15px] items-center font-bold text-[#c8c8c8]">SHAPES</div>
      <div className="ml-[8px] flex h-[14px] items-center bg-[#3b3b3b] pl-[10px] pt-[4px] font-medium text-[#d8d8d8]">Pendulum_rig_PEND_C</div>
      <div className="ml-[8px] mt-[18px] h-[289px] bg-[#2b2b2b]" />
      <div className="ml-[8px] mt-[3px] h-px bg-[#2e2e2e]" />
      <div className="ml-[7px] mt-[8px] flex h-[21px] gap-[2px]">
        <div className="flex w-[61px] items-center justify-center rounded-t-[2px] bg-[#5d5d5d] text-[#e8e8e8]">Display</div>
        <div className="flex w-[60px] items-center justify-center rounded-t-[2px] bg-[#494949] text-[#a0a0a0]">Render</div>
      </div>
      <div className="ml-[7px] h-[200px] border-2 border-r-0 border-[#383838] pl-[1px]">
        <div className="ml-[8px] flex h-[20px] items-center gap-[13px]">
          <span>Layers</span>
          <span>Options</span>
          <span>He</span>
        </div>
        <div className="mt-[26px] h-[150px] bg-[#2b2b2b] pl-[5px] pt-[2px]">
          <div className="flex items-center gap-[3px]">
            <div className="flex h-[14px] w-[20px] shrink-0 items-center justify-center rounded-[3px] border border-[#1a1a1a] bg-[#262626] text-[#e0d8a0]">V</div>
            <div className="flex h-[14px] w-[20px] shrink-0 items-center justify-center rounded-[3px] border border-[#1a1a1a] bg-[#262626] text-[#e8e8e8]">P</div>
            <div className="h-[14px] w-[20px] shrink-0 rounded-[3px] border border-[#1a1a1a] bg-[#333]" />
            <svg width="16" height="15" viewBox="0 0 16 15" className="ml-[1px] shrink-0">
              <path d="M1 14L15 1M15 0v15" stroke="#999" fill="none" />
            </svg>
            <span className="ml-[1px] font-medium text-white">Pendu</span>
          </div>
        </div>
      </div>
    </div>
  );
}

const FRAMES = Array.from({ length: 30 }, (_, i) => (i + 1) * 5);
const KEYS = [22, 194, 388, 538, 688, 817, 946, 1054, 1161, 1247, 1333, 1387, 1441, 1473, 1494, 1517, 1527];

function TimeSlider() {
  return (
    <div className="flex h-[33px] shrink-0 items-center">
      <div className="flex w-[14px] justify-center">
        <div className="h-[26px] w-[4px] border-x border-dotted border-[#777]" />
      </div>
      <div className="relative mb-[3px] mt-[3px] flex h-[28px] w-[1628px] overflow-hidden bg-[#2b2b2b] pl-[52px] font-['Liberation_Sans',sans-serif] text-[12px] leading-[14px] text-[#7c7c7c]">
        {FRAMES.slice(0, 29).map((f) => (
          <div key={f} className="flex w-[53.725px] shrink-0 flex-col">
            <span className="pl-px">{f}</span>
            <div className="mt-auto h-[14px] w-[2px] bg-[#858585]" />
          </div>
        ))}
        <div className="flex w-[18px] shrink-0 flex-col">
          <span className="pl-px">150</span>
          <div className="mt-auto h-[14px] w-[2px] bg-[#858585]" />
        </div>
        {KEYS.map((k) => (
          <div key={k} className="absolute bottom-0 top-0 w-px bg-[#e01010]" style={{ left: k - 14 }} />
        ))}
        <div className="absolute bottom-0 left-[1525px] top-0 w-[9px] bg-[#5c5c5c]" />
        <span className="absolute left-[1525px] top-[11px] text-white">142</span>
      </div>
    </div>
  );
}

export default function App() {
  return (
    <div className="flex h-[896px] w-[1654px] flex-col overflow-hidden bg-[#444]">
      <Shelf />
      <div className="flex min-h-0 flex-1">
        <LeftTools />
        <Viewport />
        <RightPanel />
      </div>
      <TimeSlider />
    </div>
  );
}
